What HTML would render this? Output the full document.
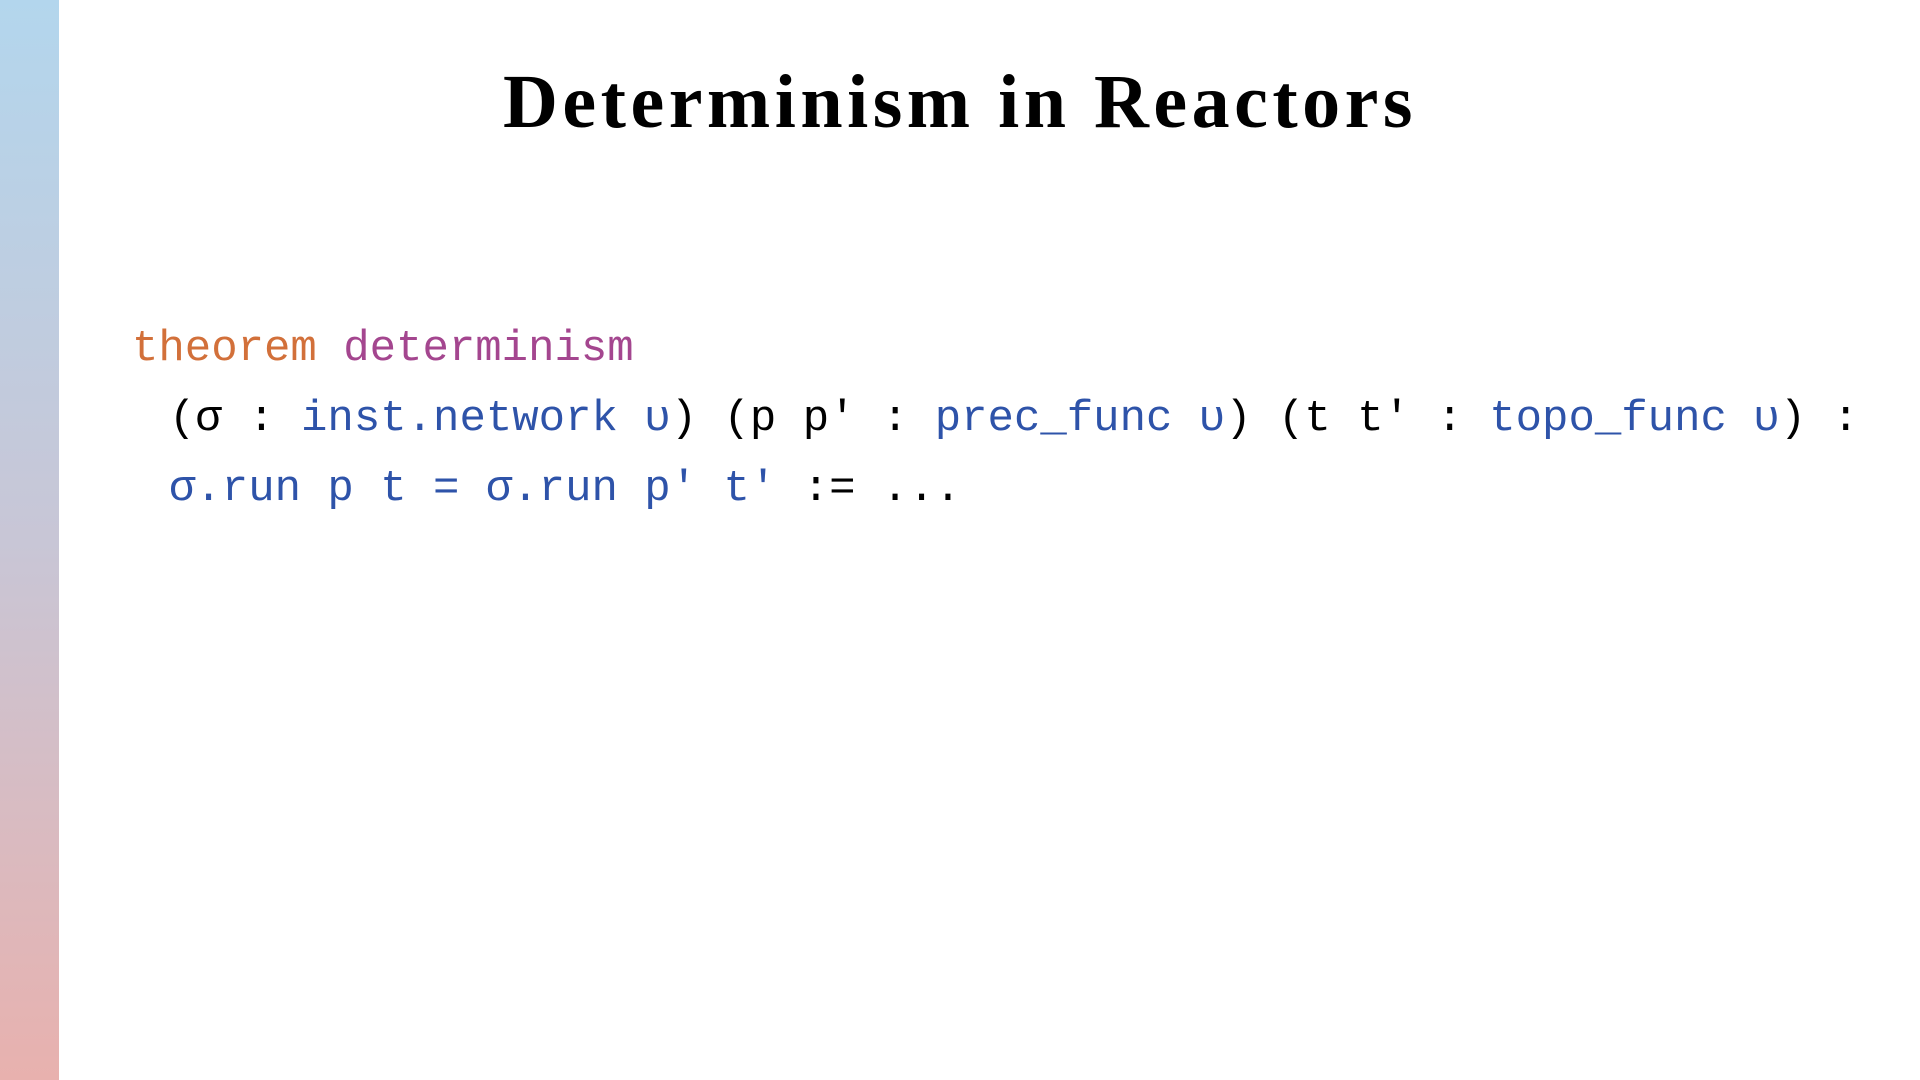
<!DOCTYPE html>
<html><head><meta charset="utf-8"><style>
html,body{margin:0;padding:0;width:1920px;height:1080px;background:#fff;overflow:hidden;position:relative}
.bar{position:absolute;left:0;top:0;width:59px;height:1080px;background:linear-gradient(#b3d6ed,#c8c6d6 50%,#e8b1ae)}
h1{position:absolute;left:0;right:0;top:59px;margin:0;text-align:center;font-family:"Liberation Serif",serif;font-weight:bold;font-size:76px;color:#000;letter-spacing:4.5px}
.code{position:absolute;font-family:"Liberation Mono",monospace;font-size:44px;white-space:pre;color:#000;line-height:70px}
.o{color:#d2703a}.p{color:#a4468f}.b{color:#2e53a9}
</style></head><body>
<div class="bar"></div>
<h1>Determinism in Reactors</h1>
<div class="code" style="left:132px;top:314px"><span class="o">theorem</span> <span class="p">determinism</span></div>
<div class="code" style="left:169px;top:384px">(σ : <span class="b">inst.network υ</span>) (p p' : <span class="b">prec_func υ</span>) (t t' : <span class="b">topo_func υ</span>) :</div>
<div class="code" style="left:169px;top:454px"><span class="b">σ.run p t = σ.run p' t'</span> := ...</div>
</body></html>
